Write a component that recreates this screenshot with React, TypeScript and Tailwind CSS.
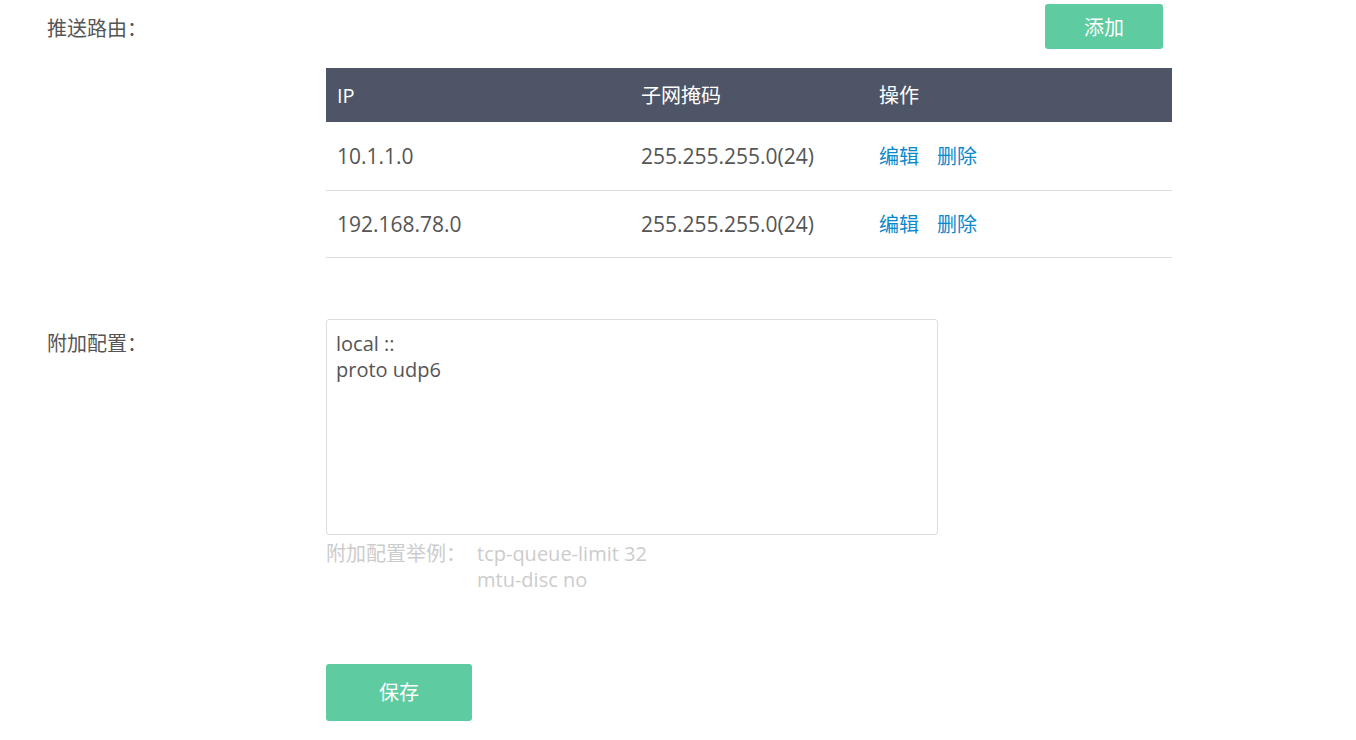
import React from "react";

const font = "font-['Open_Sans','Noto_Sans_CJK_SC',sans-serif]";

const routes = [
  { ip: "10.1.1.0", mask: "255.255.255.0(24)" },
  { ip: "192.168.78.0", mask: "255.255.255.0(24)" },
];

const App: React.FC = () => {
  return (
    <div className={`${font} w-[1356px] h-[740px] bg-white text-[#555] text-[20px]`}>
      {/* push routes */}
      <div className="flex">
        <div className="w-[326px] shrink-0 pl-[47px] pt-[15px] leading-[28px]">推送路由：</div>
        <div className="w-[846px]">
          <div className="flex justify-end pr-[9px] pt-[4px]">
            <button className="w-[118px] h-[45px] pt-[2px] bg-[#5ecba1] rounded-[3px] text-white text-[20px]">
              添加
            </button>
          </div>
          <table className="mt-[19px] w-[846px] border-collapse table-fixed">
            <thead>
              <tr className="bg-[#4e5566] text-white h-[54px]">
                <th className="w-[304px] text-left font-normal pl-[11px] pt-[2px]">IP</th>
                <th className="w-[238px] text-left font-normal pl-[11px] pt-[2px]">子网掩码</th>
                <th className="text-left font-normal pl-[11px] pt-[2px]">操作</th>
              </tr>
            </thead>
            <tbody className="text-[21px]">
              {routes.map((r, i) => (
                <tr
                  key={r.ip}
                  className={`${i === 0 ? "h-[68px]" : "h-[67px]"} border-b border-[#dddddd]`}
                >
                  <td className="pl-[11px] pt-[2px]">{r.ip}</td>
                  <td className="pl-[11px] pt-[2px]">{r.mask}</td>
                  <td className="pl-[11px] pt-[2px] text-[20px] text-[#0a88cc]">
                    <span className="cursor-pointer">编辑</span>
                    <span className="cursor-pointer ml-[18px]">删除</span>
                  </td>
                </tr>
              ))}
            </tbody>
          </table>
        </div>
      </div>

      {/* extra config */}
      <div className="flex mt-[61px]">
        <div className="w-[326px] shrink-0 pl-[47px] pt-[11px] leading-[28px]">附加配置：</div>
        <div>
          <textarea
            className="block w-[612px] h-[216px] border border-[#dddddd] rounded-[3px] px-[9px] pt-[11px] pb-[10px] leading-[26px] text-[20px] text-[#555] outline-none resize-none"
            defaultValue={"local ::\nproto udp6"}
          />
          <div className="flex text-[#cccccc] leading-[26px] mt-[6px]">
            <div className="w-[151px]">附加配置举例：</div>
            <div>
              <div>tcp-queue-limit 32</div>
              <div>mtu-disc no</div>
            </div>
          </div>
          <button className="mt-[71px] w-[146px] h-[57px] pt-[2px] bg-[#5ecba1] rounded-[3px] text-white text-[20px]">
            保存
          </button>
        </div>
      </div>
    </div>
  );
};

export default App;
